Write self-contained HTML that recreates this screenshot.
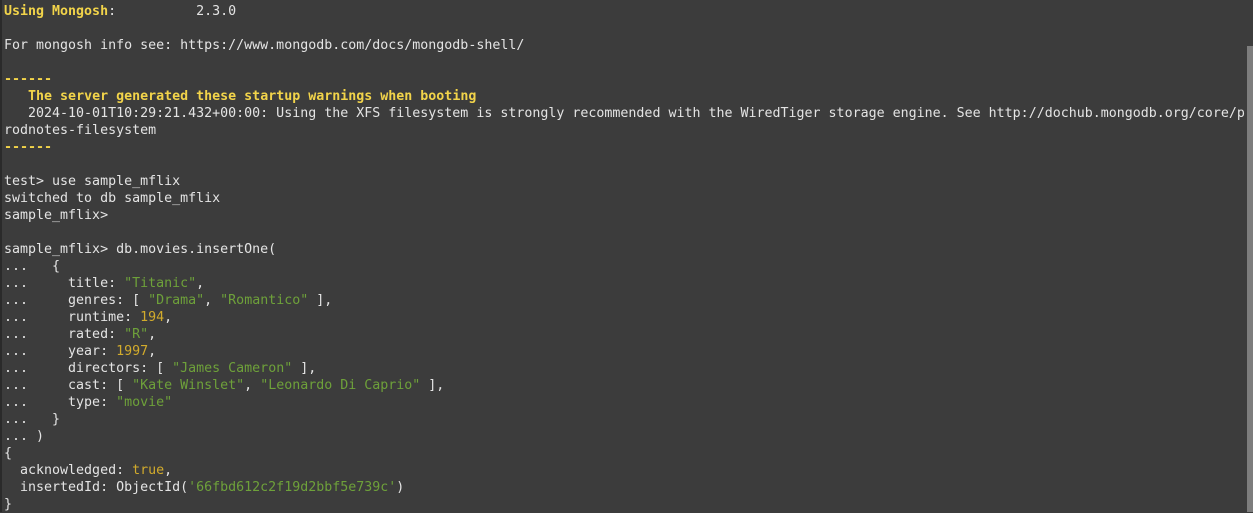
<!DOCTYPE html>
<html><head><style>
html,body{margin:0;padding:0;background:#3c3c3c;width:1253px;height:512px;overflow:hidden}
.l{position:absolute;left:0;top:0;width:2px;height:512px;background:#2a2a2a}
.sb{position:absolute;left:1247px;top:46px;width:6px;height:466px;background:#7d7d7d}
pre{position:absolute;left:4px;top:3px;margin:0;font-family:"DejaVu Sans Mono","Liberation Mono",monospace;font-size:13.3px;line-height:17px;color:#e4e4e4;white-space:pre}
.y{color:#f2d44a;font-weight:bold}
.g{color:#6ea13a}
.n{color:#d2ab2c}
</style></head><body>
<div class="l"></div>
<pre><span class="y">Using Mongosh</span>:          2.3.0

For mongosh info see: https://www.mongodb.com/docs/mongodb-shell/

<span class="y">------</span>
   <span class="y">The server generated these startup warnings when booting</span>
   2024-10-01T10:29:21.432+00:00: Using the XFS filesystem is strongly recommended with the WiredTiger storage engine. See http://dochub.mongodb.org/core/p
rodnotes-filesystem
<span class="y">------</span>

test&gt; use sample_mflix
switched to db sample_mflix
sample_mflix&gt;

sample_mflix&gt; db.movies.insertOne(
...   {
...     title: <span class="g">"Titanic"</span>,
...     genres: [ <span class="g">"Drama"</span>, <span class="g">"Romantico"</span> ],
...     runtime: <span class="n">194</span>,
...     rated: <span class="g">"R"</span>,
...     year: <span class="n">1997</span>,
...     directors: [ <span class="g">"James Cameron"</span> ],
...     cast: [ <span class="g">"Kate Winslet"</span>, <span class="g">"Leonardo Di Caprio"</span> ],
...     type: <span class="g">"movie"</span>
...   }
... )
{
  acknowledged: <span class="n">true</span>,
  insertedId: ObjectId(<span class="g">'66fbd612c2f19d2bbf5e739c'</span>)
}</pre>
<div class="sb"></div>
</body></html>
